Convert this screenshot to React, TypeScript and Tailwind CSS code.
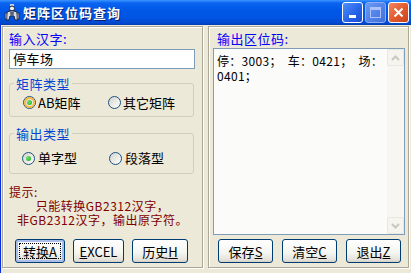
import React from 'react';

const font = "font-['Noto_Sans_CJK_SC','Noto_Sans',sans-serif]";

function Radio({ checked, hot }: { checked?: boolean; hot?: boolean }) {
  return (
    <span className="relative flex h-[13px] w-[13px] shrink-0 items-center justify-center rounded-full border border-[#1C5180] bg-[linear-gradient(135deg,#D4D4CD,#FFFFFF)]">
      {hot && <span className="absolute inset-0 rounded-full border-2 border-[#F9B83C]" />}
      {checked && (
        <span className="relative h-[5px] w-[5px] rounded-full bg-[radial-gradient(circle_at_35%_35%,#6BE86B,#1FA01F)]" />
      )}
    </span>
  );
}

function XpButton({ w, focus, children }: { w: string; focus?: boolean; children: React.ReactNode }) {
  return (
    <button
      className={`relative ${w} flex h-[24px] items-center justify-center rounded-[3px] border border-[#003C74] bg-[linear-gradient(to_bottom,#FFFFFF,#F4F4F0_60%,#E3E1D9_90%,#D6D0C5)] text-[13px] leading-none text-black ${
        focus ? 'shadow-[inset_0_0_0_2px_#A9BEEB]' : ''
      }`}
    >
      {focus && <span className="absolute inset-[3px] border border-dotted border-black" />}
      <span className="relative">{children}</span>
    </button>
  );
}

function TitleIcon() {
  return (
    <svg width="16" height="18" viewBox="0 0 16 18">
      <rect x="6" y="0" width="4" height="2" fill="#C8D0E0" />
      <circle cx="8" cy="4.5" r="2.5" fill="#F0F0F0" stroke="#202840" strokeWidth="1" />
      <path d="M3 8 L6 7 L10 7 L13 8 L14 16 L11 16 L10 12 L6 12 L5 16 L2 16 Z" fill="#D8DCE4" stroke="#1A2240" strokeWidth="1" />
      <path d="M6 8 L10 8 L9.5 12 L6.5 12 Z" fill="#5A6478" />
      <rect x="1" y="9" width="2" height="6" fill="#9098A8" stroke="#1A2240" strokeWidth="0.6" />
      <rect x="13" y="9" width="2" height="6" fill="#9098A8" stroke="#1A2240" strokeWidth="0.6" />
    </svg>
  );
}

export default function App() {
  return (
    <div className={`flex h-[273px] w-[411px] flex-col overflow-hidden bg-[#ECE9D8] ${font}`}>
      {/* title bar */}
      <div className="flex h-[25px] shrink-0 items-center bg-[linear-gradient(to_bottom,#3D95FF_0%,#0A64F0_12%,#0058E8_40%,#0055E3_70%,#0048D0_92%,#003CB0_100%)] pl-[4px] pr-[2px]">
        <TitleIcon />
        <span className="ml-[3px] text-[13px] font-bold tracking-[1px] text-white [text-shadow:1px_1px_0_#0A1F6E]">
          矩阵区位码查询
        </span>
        <div className="ml-auto flex gap-[2px] self-start pt-[2px]">
          <div className="flex h-[21px] w-[21px] items-end justify-center rounded-[3px] border border-white bg-[linear-gradient(135deg,#4E8FF8,#2461E8_60%,#1E4FD0)] pb-[4px]">
            <span className="h-[3px] w-[7px] bg-white" />
          </div>
          <div className="flex h-[21px] w-[21px] items-center justify-center rounded-[3px] border border-[#8DAEF5] bg-[linear-gradient(135deg,#6C9AF3,#4F7FE8_60%,#4470DA)]">
            <span className="h-[11px] w-[11px] border border-t-[3px] border-[#A9C2F7]" />
          </div>
          <div className="flex h-[21px] w-[21px] items-center justify-center rounded-[3px] border border-white bg-[linear-gradient(135deg,#F0885E,#E2582C_55%,#C9401C)]">
            <svg width="11" height="11" viewBox="0 0 11 11">
              <path d="M1.5 1.5 L9.5 9.5 M9.5 1.5 L1.5 9.5" stroke="#fff" strokeWidth="2" />
            </svg>
          </div>
        </div>
      </div>

      {/* body */}
      <div className="flex flex-1 gap-[5px] border-l border-[#0831D9] pl-[1px] pr-[2px] pt-[1px]">
        {/* left panel */}
        <div className="flex h-[242px] w-[201px] flex-col border border-[#ACA899] px-[6px] pt-[4px] shadow-[inset_1px_1px_0_#fff,1px_1px_0_#fff]">
          <div className="h-[15px] text-[13px] leading-[15px] tracking-[0.5px] text-[#0000FF]">输入汉字:</div>
          <div className="mt-[3px] flex h-[20px] w-[186px] items-center border border-[#7F9DB9] bg-white pl-[3px] text-[13px] tracking-[0.5px] text-black">
            停车场
          </div>

          <fieldset className="mt-[7px] h-[41px] w-[185px] rounded-[3px] border border-[#D0D0BF] px-[13px]">
            <legend className="ml-[-9px] px-[2px] text-[13px] leading-[15px] tracking-[0.5px] text-[#0046D5]">矩阵类型</legend>
            <div className="flex h-[23px] items-center text-[13px] text-black">
              <label className="flex w-[85px] items-center gap-[2px]">
                <Radio checked hot />
                <span>AB矩阵</span>
              </label>
              <label className="flex items-center gap-[2px]">
                <Radio />
                <span>其它矩阵</span>
              </label>
            </div>
          </fieldset>

          <fieldset className="mt-[9px] h-[48px] w-[185px] rounded-[3px] border border-[#D0D0BF] px-[12px]">
            <legend className="ml-[-8px] px-[2px] text-[13px] leading-[15px] tracking-[0.5px] text-[#0046D5]">输出类型</legend>
            <div className="mt-[6px] flex h-[22px] items-center text-[13px] text-black">
              <label className="flex w-[87px] items-center gap-[3px]">
                <Radio checked />
                <span>单字型</span>
              </label>
              <label className="flex items-center gap-[3px]">
                <Radio />
                <span>段落型</span>
              </label>
            </div>
          </fieldset>

          <div className="mt-[11px] text-[12px] leading-[14px] tracking-[0.5px] text-[#800000]">
            <div>提示:</div>
            <div className="text-center">只能转换GB2312汉字，</div>
            <div className="text-center">非GB2312汉字，输出原字符。</div>
          </div>

          <div className="mt-[12px] flex items-center pl-[6px]">
            <XpButton w="w-[50px]" focus>
              转换<u>A</u>
            </XpButton>
            <div className="ml-[8px]">
              <XpButton w="w-[51px]">
                <u>E</u>XCEL
              </XpButton>
            </div>
            <div className="ml-[8px]">
              <XpButton w="w-[56px]">
                历史<u>H</u>
              </XpButton>
            </div>
          </div>
        </div>

        {/* right panel */}
        <div className="flex h-[242px] w-[201px] flex-col border border-[#ACA899] pl-[4px] pt-[4px] shadow-[inset_1px_1px_0_#fff,1px_1px_0_#fff]">
          <div className="h-[15px] pl-[4px] text-[13px] leading-[15px] tracking-[0.5px] text-[#0000FF]">输出区位码:</div>
          <div className="mt-[2px] flex h-[187px] w-[192px] border border-[#7F9DB9] bg-[#FBFBFA]">
            <div className="flex-1 whitespace-pre pl-[3px] pt-[4px] text-[12px] leading-[15px] tracking-[0.3px] text-black">
              <div>停：3003；  车：0421；  场：</div>
              <div>0401；</div>
            </div>
            <div className="flex w-[17px] flex-col bg-[#F7F6F1]">
              <div className="flex h-[17px] items-center justify-center rounded-[2px] border border-[#E8E7E0] bg-[#F5F4EE]">
                <svg width="9" height="6" viewBox="0 0 9 6">
                  <path d="M1 5 L4.5 1.5 L8 5" stroke="#C9C8BE" strokeWidth="2" fill="none" />
                </svg>
              </div>
              <div className="flex-1" />
              <div className="flex h-[17px] items-center justify-center rounded-[2px] border border-[#E8E7E0] bg-[#F5F4EE]">
                <svg width="9" height="6" viewBox="0 0 9 6">
                  <path d="M1 1 L4.5 4.5 L8 1" stroke="#C9C8BE" strokeWidth="2" fill="none" />
                </svg>
              </div>
            </div>
          </div>

          <div className="mt-[4px] flex items-center gap-[9px] pl-[5px]">
            <XpButton w="w-[55px]">
              保存<u>S</u>
            </XpButton>
            <XpButton w="w-[55px]">
              清空<u>C</u>
            </XpButton>
            <XpButton w="w-[55px]">
              退出<u>Z</u>
            </XpButton>
          </div>
        </div>
      </div>
    </div>
  );
}
